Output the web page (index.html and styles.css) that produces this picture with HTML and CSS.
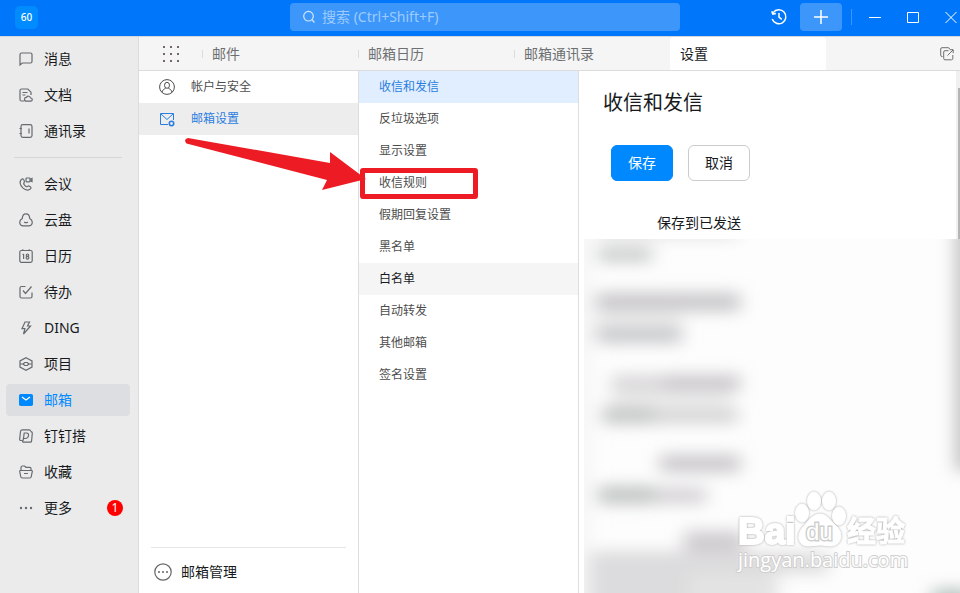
FILE: index.html
```html
<!DOCTYPE html>
<html lang="zh-CN">
<head>
<meta charset="utf-8">
<meta name="viewport" content="width=device-width, initial-scale=1">
<title>邮箱设置</title>
<link rel="stylesheet" href="styles.css">
</head>
<body>
<div class="app">
  <header class="titlebar">
    <div class="brand"><span class="avatar">60</span></div>
    <label class="search">
      <svg class="search-icon" viewBox="0 0 14 14" aria-hidden="true"><circle cx="6.500" cy="6.200" r="4.800"/><path d="M10 9.700l2.400 2.800"/></svg>
      <input type="search" aria-label="搜索" placeholder="搜索 (Ctrl+Shift+F)">
    </label>
    <div class="window-tools">
      <button class="tool history" aria-label="历史"><svg viewBox="0 0 18 18"><path d="M3.200 4.600A7 7 0 1 1 2.200 11M1.800 3.200l1 2.900 3.100-.7M9 5v4.200l2.800 2.200"/></svg></button>
      <button class="tool add" aria-label="新建"><svg viewBox="0 0 18 18"><path d="M9 2v14M2 9h14"/></svg></button>
      <span class="tool-line"></span>
      <button class="tool win" aria-label="最小化"><svg class="thin" viewBox="0 0 14 14"><path d="M1 7.500h12"/></svg></button>
      <button class="tool win" aria-label="最大化"><svg class="thin" viewBox="0 0 14 14"><path d="M1.500 2.500h11v10h-11z"/></svg></button>
      <button class="tool win" aria-label="关闭"><svg class="thin" viewBox="0 0 14 14"><path d="M1.500 2l11 11M12.500 2l-11 11"/></svg></button>
    </div>
  </header>

  <div class="workspace">
    <nav class="sidebar">
      <a class="side-item" href="#"><svg viewBox="0 0 14 14"><path d="M1 13V2.500Q1 1 2.500 1h9Q13 1 13 2.500v7Q13 11 11.500 11H3.300z"/></svg>消息</a>
      <a class="side-item" href="#"><svg viewBox="0 0 14 14"><path d="M5 13H2.500Q1 13 1 11.500v-9Q1 1 2.500 1h6.300L12 4.200V7M3.500 4.500h5M3.500 7h3"/><path d="M7.300 13.200a1.900 1.900 0 0 1 .2-3.800 2.200 2.200 0 0 1 4.100.6 1.600 1.600 0 0 1 .1 3.200z"/></svg>文档</a>
      <a class="side-item" href="#"><svg viewBox="0 0 14 14"><rect x="2" y=".7" width="11" height="12.600" rx="1.800"/><path d="M10 4.500v5M.5 4.500h2.300M.5 9.500h2.300"/></svg>通讯录</a>
      <hr class="side-rule">
      <a class="side-item" href="#"><svg viewBox="0 0 14 14"><path d="M3.600 1.800c-4 1.700-2.700 6.500.2 9.100 3 2.700 6.700 3 8.200.4.500-.9-2.300-3-3.100-2.100-.9 1-1.800.8-3.200-.8-1.200-1.300-1.400-2-.5-2.900.8-.8-.8-4-1.600-3.700z"/><rect x="7" y="1" width="4" height="3.800" rx=".7"/><path d="M11 2.400l2-1v3.200l-2-1"/></svg>会议</a>
      <a class="side-item" href="#"><svg viewBox="0 0 14 14"><path d="M3.300 5.500C3.500-.6 10.500-.6 10.700 5.500c4 2.200 3 7.300-.9 7.300H4.200C.3 12.800-.7 7.700 3.300 5.500z"/><path d="M5.200 9q1.800 1.400 3.600 0"/></svg>云盘</a>
      <a class="side-item" href="#"><svg viewBox="0 0 14 14"><rect x=".8" y="1.500" width="12.400" height="11.800" rx="1.500"/><path d="M3.800.3v1.500M10.200.3v1.500M4.600 5v5M3.600 5.800l1-.8"/><circle cx="8.500" cy="6.200" r="1.200"/><circle cx="8.500" cy="8.800" r="1.400"/></svg>日历</a>
      <a class="side-item" href="#"><svg viewBox="0 0 14 14"><path d="M6.500 1.500h-4Q1 1.500 1 3v8.500Q1 13 2.500 13h9q1.500 0 1.500-1.500V7.500M4 5.500L6.500 8.500l6-7"/></svg>待办</a>
      <a class="side-item" href="#"><svg viewBox="0 0 14 14"><path d="M6 1h4.500L8.500 5h3L4.500 13l1.400-5.300H3z"/></svg>DING</a>
      <a class="side-item" href="#"><svg viewBox="0 0 14 14"><path d="M7 .7l6 3.200v6.200l-6 3.200-6-3.200V3.900z"/><path d="M1 7h3l1.800-1.500h2.400L10 7h3M4 7l1.800 1.500h2.400L10 7"/></svg>项目</a>
      <a class="side-item active" href="#" aria-current="page"><svg class="solid" viewBox="0 0 14 14"><rect x="0" y="1" width="14" height="12" rx="1.800"/><path d="M3 4l4 3 4-3"/></svg>邮箱</a>
      <a class="side-item" href="#"><svg viewBox="0 0 14 14"><path d="M3.500 11.500H2Q.5 11.500.7 10l.8-7.500Q1.700.8 3.300.8h6.900Q11.500.8 11.400 2"/><path d="M3.500 13.200h7.700q1.300 0 1.400-1.300l.7-7.700q.1-1.600-1.800-1.900M5.200 4h2.500q2 0 1.800 2.500T6.800 9.500H4.500z"/><path d="M4.500 9.500l-1 3.700"/></svg>钉钉搭</a>
      <a class="side-item" href="#"><svg viewBox="0 0 14 14"><path d="M1.200 5.500h11.600q.7 0 .5.800l-1 5.200q-.3 1.500-1.600 1.500H3.300q-1.300 0-1.600-1.500l-1-5.200q-.1-.8.5-.8zM2 5.300V2.500Q2 1 3.500 1h2L7 2.300h3.800Q12 2.300 12 3.500v1.800M5 8.500h4"/></svg>收藏</a>
      <a class="side-item" href="#"><svg class="dots" viewBox="0 0 14 14"><circle cx="2" cy="7" r="1.200"/><circle cx="7" cy="7" r="1.200"/><circle cx="12" cy="7" r="1.200"/></svg>更多<span class="badge">1</span></a>
    </nav>

    <div class="main">
      <div class="tabbar">
        <button class="launcher" aria-label="应用"><svg viewBox="0 0 16 16"><path d="M0 0h2v2H0zM7 0h2v2H7zM14 0h2v2h-2zM0 7h2v2H0zM7 7h2v2H7zM14 7h2v2h-2zM0 14h2v2H0zM7 14h2v2H7zM14 14h2v2h-2z"/></svg></button>
        <nav class="tabs">
          <a class="tab" href="#">邮件</a>
          <a class="tab" href="#">邮箱日历</a>
          <a class="tab" href="#">邮箱通讯录</a>
          <a class="tab current" href="#" aria-current="page">设置</a>
        </nav>
        <button class="popout" aria-label="在新窗口打开"><svg viewBox="0 0 14 14"><path d="M2.500 9.500H2Q.7 9.500.7 8.200V2Q.7.700 2 .7h6.200Q9.500.7 9.500 2M8.500 3.700H5Q3.700 3.700 3.700 5v6.500q0 1.300 1.300 1.300h6.500q1.300 0 1.300-1.300V8M7.500 8.500L13 3M9.700 2.700h3.500v3.500"/></svg></button>
      </div>

      <div class="panes">
        <aside class="pane groups">
          <a class="row group" href="#"><svg viewBox="0 0 16 16"><circle cx="8" cy="8" r="7.400"/><ellipse cx="8" cy="6.300" rx="2.500" ry="3"/><path d="M3 13.300c.5-2.500 1.800-3 3.600-4M13 13.300c-.5-2.500-1.800-3-3.600-4"/></svg>帐户与安全</a>
          <a class="row group selected" href="#"><svg viewBox="0 0 16 16"><path d="M9 13.500H1.500v-11h13V9M2 3l6 5.500L14 3"/><circle class="gear" cx="12.500" cy="12.500" r="2.200"/></svg>邮箱设置</a>
          <a class="manage" href="#"><svg viewBox="0 0 18 18"><circle class="ring" cx="9" cy="9" r="8.200"/><circle cx="5" cy="9" r="1"/><circle cx="9" cy="9" r="1"/><circle cx="13" cy="9" r="1"/></svg>邮箱管理</a>
        </aside>

        <nav class="pane options">
          <a class="row option chosen" href="#">收信和发信</a>
          <a class="row option" href="#">反垃圾选项</a>
          <a class="row option" href="#">显示设置</a>
          <a class="row option marked" href="#">收信规则
            <span class="mark-box"></span>
            <svg class="mark-arrow" viewBox="0 0 184 56" aria-hidden="true"><path d="M4 0L146 25V14L182 41 138 52 143 42 2.500 5.500Q-1 1 4 0z"/></svg>
          </a>
          <a class="row option" href="#">假期回复设置</a>
          <a class="row option" href="#">黑名单</a>
          <a class="row option hovered" href="#">白名单</a>
          <a class="row option" href="#">自动转发</a>
          <a class="row option" href="#">其他邮箱</a>
          <a class="row option" href="#">签名设置</a>
        </nav>

        <main class="content">
          <div class="settings">
            <h1>收信和发信</h1>
            <div class="actions">
              <button class="btn primary">保存</button>
              <button class="btn">取消</button>
            </div>
            <p class="field-name">保存到已发送</p>
          </div>
          <div class="scrollbar"><span class="thumb"></span></div>
          <svg class="obscured" viewBox="0 0 376 354" preserveAspectRatio="xMinYMin slice" aria-hidden="true">
            <defs>
              <filter id="soft" x="-20%" y="-20%" width="140%" height="140%"><feGaussianBlur stdDeviation="9 8"/></filter>
            </defs>
            <rect width="376" height="354" fill="#fdfdfd"/>
            <g filter="url(#soft)">
              <rect x="-10" y="-10" width="16" height="380" fill="#f5f5f5"/>
              <rect x="14" y="-12" width="140" height="10" fill="#dcdcdc"/>
              <rect x="14" y="8" width="54" height="15" fill="#c8cccb"/>
              <rect x="12" y="54" width="144" height="18" fill="#c6c4c8"/>
              <rect x="12" y="72" width="86" height="15" fill="#f0f0f0"/>
              <rect x="12" y="87" width="86" height="17" fill="#c6c8ca"/>
              <rect x="28" y="136" width="52" height="16" fill="#d8d6d8"/>
              <rect x="80" y="136" width="76" height="16" fill="#c9c5c9"/>
              <rect x="28" y="152" width="120" height="14" fill="#ececec"/>
              <rect x="18" y="167" width="52" height="18" fill="#c4c8c6"/>
              <rect x="70" y="169" width="84" height="15" fill="#d2d2d3"/>
              <rect x="76" y="216" width="80" height="17" fill="#c8c5c9"/>
              <rect x="14" y="247" width="56" height="18" fill="#bfc4c2"/>
              <rect x="70" y="249" width="52" height="15" fill="#d1ced1"/>
              <rect x="100" y="292" width="60" height="24" fill="#cfcbce"/>
              <rect x="6" y="312" width="150" height="60" fill="#dcdbdd"/>
              <rect x="156" y="314" width="88" height="20" fill="#dcdada"/>
              <rect x="104" y="333" width="90" height="40" fill="#e3e3e3"/>
              <rect x="372" y="-20" width="20" height="252" fill="#bdbdbd"/>
              <rect x="348" y="350" width="40" height="24" fill="#b5c3bc"/>
            </g>
          </svg>
          <svg class="watermark" viewBox="0 0 180 86" role="img" aria-label="Baidu 经验">
            <g class="wm-shape">
              <text class="wm-bai" x="3" y="56">Bai</text>
              <ellipse cx="67" cy="25" rx="6.500" ry="9"/><ellipse cx="79" cy="13" rx="6.500" ry="9"/>
              <ellipse cx="94" cy="13" rx="6.500" ry="9"/><ellipse cx="104" cy="28" rx="6.500" ry="9"/>
              <path d="M85 26c8 0 11 8 17 13 8 8 3 19-6 19-5 0-7-1-11-1s-8 1-12 1c-10 0-12-11-5-19 5-5 9-13 17-13z"/>
              <text class="wm-cn" x="112" y="54">经验</text>
            </g>
            <text class="wm-du" x="71" y="52">du</text>
            <text class="wm-url" x="3" y="79">jingyan.baidu.com</text>
          </svg>
        </main>
      </div>
    </div>
  </div>
</div>
</body>
</html>
```
FILE: styles.css
```css
* {
  box-sizing: border-box;
}

body {
  margin: 0;
  font-family: "Noto Sans", "Noto Sans CJK SC", sans-serif;
  font-size: 14px;
  line-height: 20px;
  color: #171a1d;
  background: #fff;
}

a {
  color: inherit;
  text-decoration: none;
}

button,
input {
  font: inherit;
  color: inherit;
  border: 0;
  background: none;
  padding: 0;
}

svg {
  display: block;
  flex: none;
  fill: none;
  stroke: currentColor;
}

.app {
  display: flex;
  flex-direction: column;
  height: 100vh;
  overflow: hidden;
}

/* Title bar */
.titlebar {
  flex: none;
  display: grid;
  grid-template-columns: 1fr minmax(0, 390px) 280px;
  align-items: center;
  padding: 3px 0 5px;
  color: #fff;
  background: #0077fa;
}

.brand {
  padding-left: 15px;
}

.avatar {
  display: block;
  width: 23px;
  border-radius: 5px;
  font-size: 10px;
  font-weight: 500;
  line-height: 23px;
  text-align: center;
  background: #008cff;
}

.search {
  display: flex;
  align-items: center;
  gap: 6px;
  height: 28px;
  padding: 0 12px;
  border-radius: 4px;
  background: #3d97fb;
}

.search-icon {
  width: 14px;
  color: #d4e8ff;
  stroke-width: 1.2;
}

.search input {
  flex: 1;
  min-width: 0;
  outline: 0;
}

.search input::placeholder {
  color: #9ecbfd;
  opacity: 1;
}

.window-tools {
  display: flex;
  justify-content: flex-end;
  align-items: center;
}

.tool {
  display: flex;
  justify-content: center;
  align-items: center;
  height: 28px;
}

.tool svg {
  width: 18px;
  stroke-width: 1.5;
}

.tool .thin {
  width: 14px;
  stroke-width: 1;
}

.history {
  width: 42px;
}

.add {
  width: 42px;
  border-radius: 4px;
  background: #3d97fb;
}

.tool-line {
  width: 1px;
  height: 16px;
  margin: 0 4px 0 9px;
  background: #3d97fb;
}

.win {
  width: 38px;
}

.win:last-child {
  margin-right: -10px;
}

.workspace {
  flex: 1;
  display: flex;
  min-height: 0;
  border-top: 1px solid #d4d8de;
}

/* Sidebar */
.sidebar {
  flex: none;
  display: flex;
  flex-direction: column;
  gap: 4px;
  width: 139px;
  padding: 6px 8px 6px 6px;
  border-right: 1px solid #dcdcdc;
  background: #ebebeb;
}

.side-item {
  display: flex;
  align-items: center;
  gap: 11px;
  height: 32px;
  padding: 0 7px 0 13px;
  border-radius: 4px;
}

.side-item svg {
  width: 14px;
  color: #666b70;
  stroke-width: 1.2;
}

.side-item .dots {
  fill: currentColor;
  stroke: none;
}

.side-item.active {
  color: #0089ff;
  background: #dcdee1;
}

.side-item .solid {
  color: #fff;
}

.solid rect {
  fill: #0089ff;
  stroke: none;
}

.side-rule {
  width: 108px;
  height: 1px;
  margin: 6px 8px;
  border: 0;
  background: #d6d6d6;
}

.badge {
  width: 16px;
  margin-left: auto;
  border-radius: 8px;
  font-size: 12px;
  line-height: 16px;
  text-align: center;
  color: #fff;
  background: #f00;
}

/* Tabs */
.main {
  flex: 1;
  display: flex;
  flex-direction: column;
  min-width: 0;
}

.tabbar {
  flex: none;
  display: flex;
  align-items: center;
  height: 34px;
  padding-right: 6px;
  border-bottom: 1px solid #dcdcdc;
  color: #6d6f72;
  background: #f5f5f5;
}

.launcher {
  width: 63px;
  padding-left: 24px;
}

.launcher svg {
  width: 16px;
  fill: #74676c;
  stroke: none;
}

.tabs {
  flex: 1;
  display: flex;
  min-width: 0;
}

.tab {
  flex: 0 1 156px;
  display: flex;
  align-items: center;
  height: 33px;
}

.tab::before {
  content: "";
  width: 1px;
  height: 8px;
  margin-right: 9px;
  background: #dcdcdc;
}

.tab.current {
  border-radius: 4px 4px 0 0;
  color: #171a1d;
  background: #fff;
}

.tab.current::before {
  background: #fff;
}

.popout svg {
  width: 14px;
}

/* Panes */
.panes {
  flex: 1;
  display: flex;
  min-height: 0;
}

.pane {
  flex: none;
  display: flex;
  flex-direction: column;
  width: 220px;
  border-right: 1px solid #dedede;
}

.row {
  display: flex;
  align-items: center;
  height: 32px;
  font-size: 12px;
  color: #4d4d4d;
}

.group {
  gap: 16px;
  padding-left: 20px;
}

.group svg {
  width: 16px;
}

.group.selected {
  color: #2b7de0;
  background: #ededed;
}

.gear {
  stroke-width: 1.6;
  fill: #ededed;
}

.manage {
  display: flex;
  align-items: center;
  gap: 9px;
  height: 46px;
  margin: auto 12px 0;
  padding: 2px 3px 0;
  border-top: 1px solid #e6e6e6;
}

.manage svg {
  width: 18px;
  fill: #666;
  stroke: none;
}

.manage .ring {
  fill: none;
  stroke: #666;
  stroke-width: 1.2;
}

.option {
  padding-left: 20px;
}

.option.chosen {
  color: #2b7de0;
  background: #e0eeff;
}

.option.hovered {
  color: #171a1d;
  background: #f5f5f5;
}

.marked {
  position: relative;
}

.mark-box {
  position: absolute;
  top: 1px;
  left: 1px;
  width: 118px;
  height: 31px;
  border: 5px solid #ed1c24;
  border-radius: 3px;
}

.mark-arrow {
  position: absolute;
  top: -29px;
  right: 210px;
  width: 184px;
  fill: #ed1c24;
  stroke: none;
}

/* Settings page */
.content {
  position: relative;
  flex: 1;
  display: flex;
  min-width: 0;
}

.settings {
  flex: 1;
  padding: 18px 24px;
}

h1 {
  margin: 0;
  font-size: 20px;
  font-weight: 400;
  line-height: 28px;
}

.actions {
  display: flex;
  gap: 15px;
  margin: 28px 8px 32px;
}

.btn {
  width: 62px;
  height: 36px;
  border: 1px solid #ccc;
  border-radius: 6px;
  background: #fff;
}

.btn.primary {
  border-color: #0089ff;
  color: #fff;
  background: #0089ff;
}

.field-name {
  width: 138px;
  margin: 0;
  text-align: right;
}

.scrollbar {
  flex: none;
  width: 4px;
  padding: 17px 0 0 2px;
  background: #f0f0f0;
}

.thumb {
  display: block;
  height: 370px;
  background: #b5b5b5;
}

.obscured {
  position: absolute;
  inset: 168px 0 0 5px;
  width: calc(100% - 5px);
  height: calc(100% - 168px);
  stroke: none;
}

.watermark {
  position: absolute;
  right: 45px;
  bottom: 19px;
  width: 180px;
  stroke: none;
}

.wm-shape {
  fill: #fff;
  stroke: #fff;
  filter: drop-shadow(0 0 1px #a8a8a8);
}

.wm-bai {
  font: 700 37px "Liberation Sans", sans-serif;
  stroke-width: 2px;
}

.wm-du {
  font: 400 24px "Liberation Sans", sans-serif;
  fill: #fff;
  stroke: #cfcfcf;
  stroke-width: 3px;
  paint-order: stroke;
}

.wm-cn {
  font: 700 29px "Noto Sans CJK SC", sans-serif;
}

.wm-url {
  font: 400 20px "Open Sans", sans-serif;
  fill: #fff;
  stroke: #cfcfcf;
  stroke-width: 2px;
  paint-order: stroke;
}
```
